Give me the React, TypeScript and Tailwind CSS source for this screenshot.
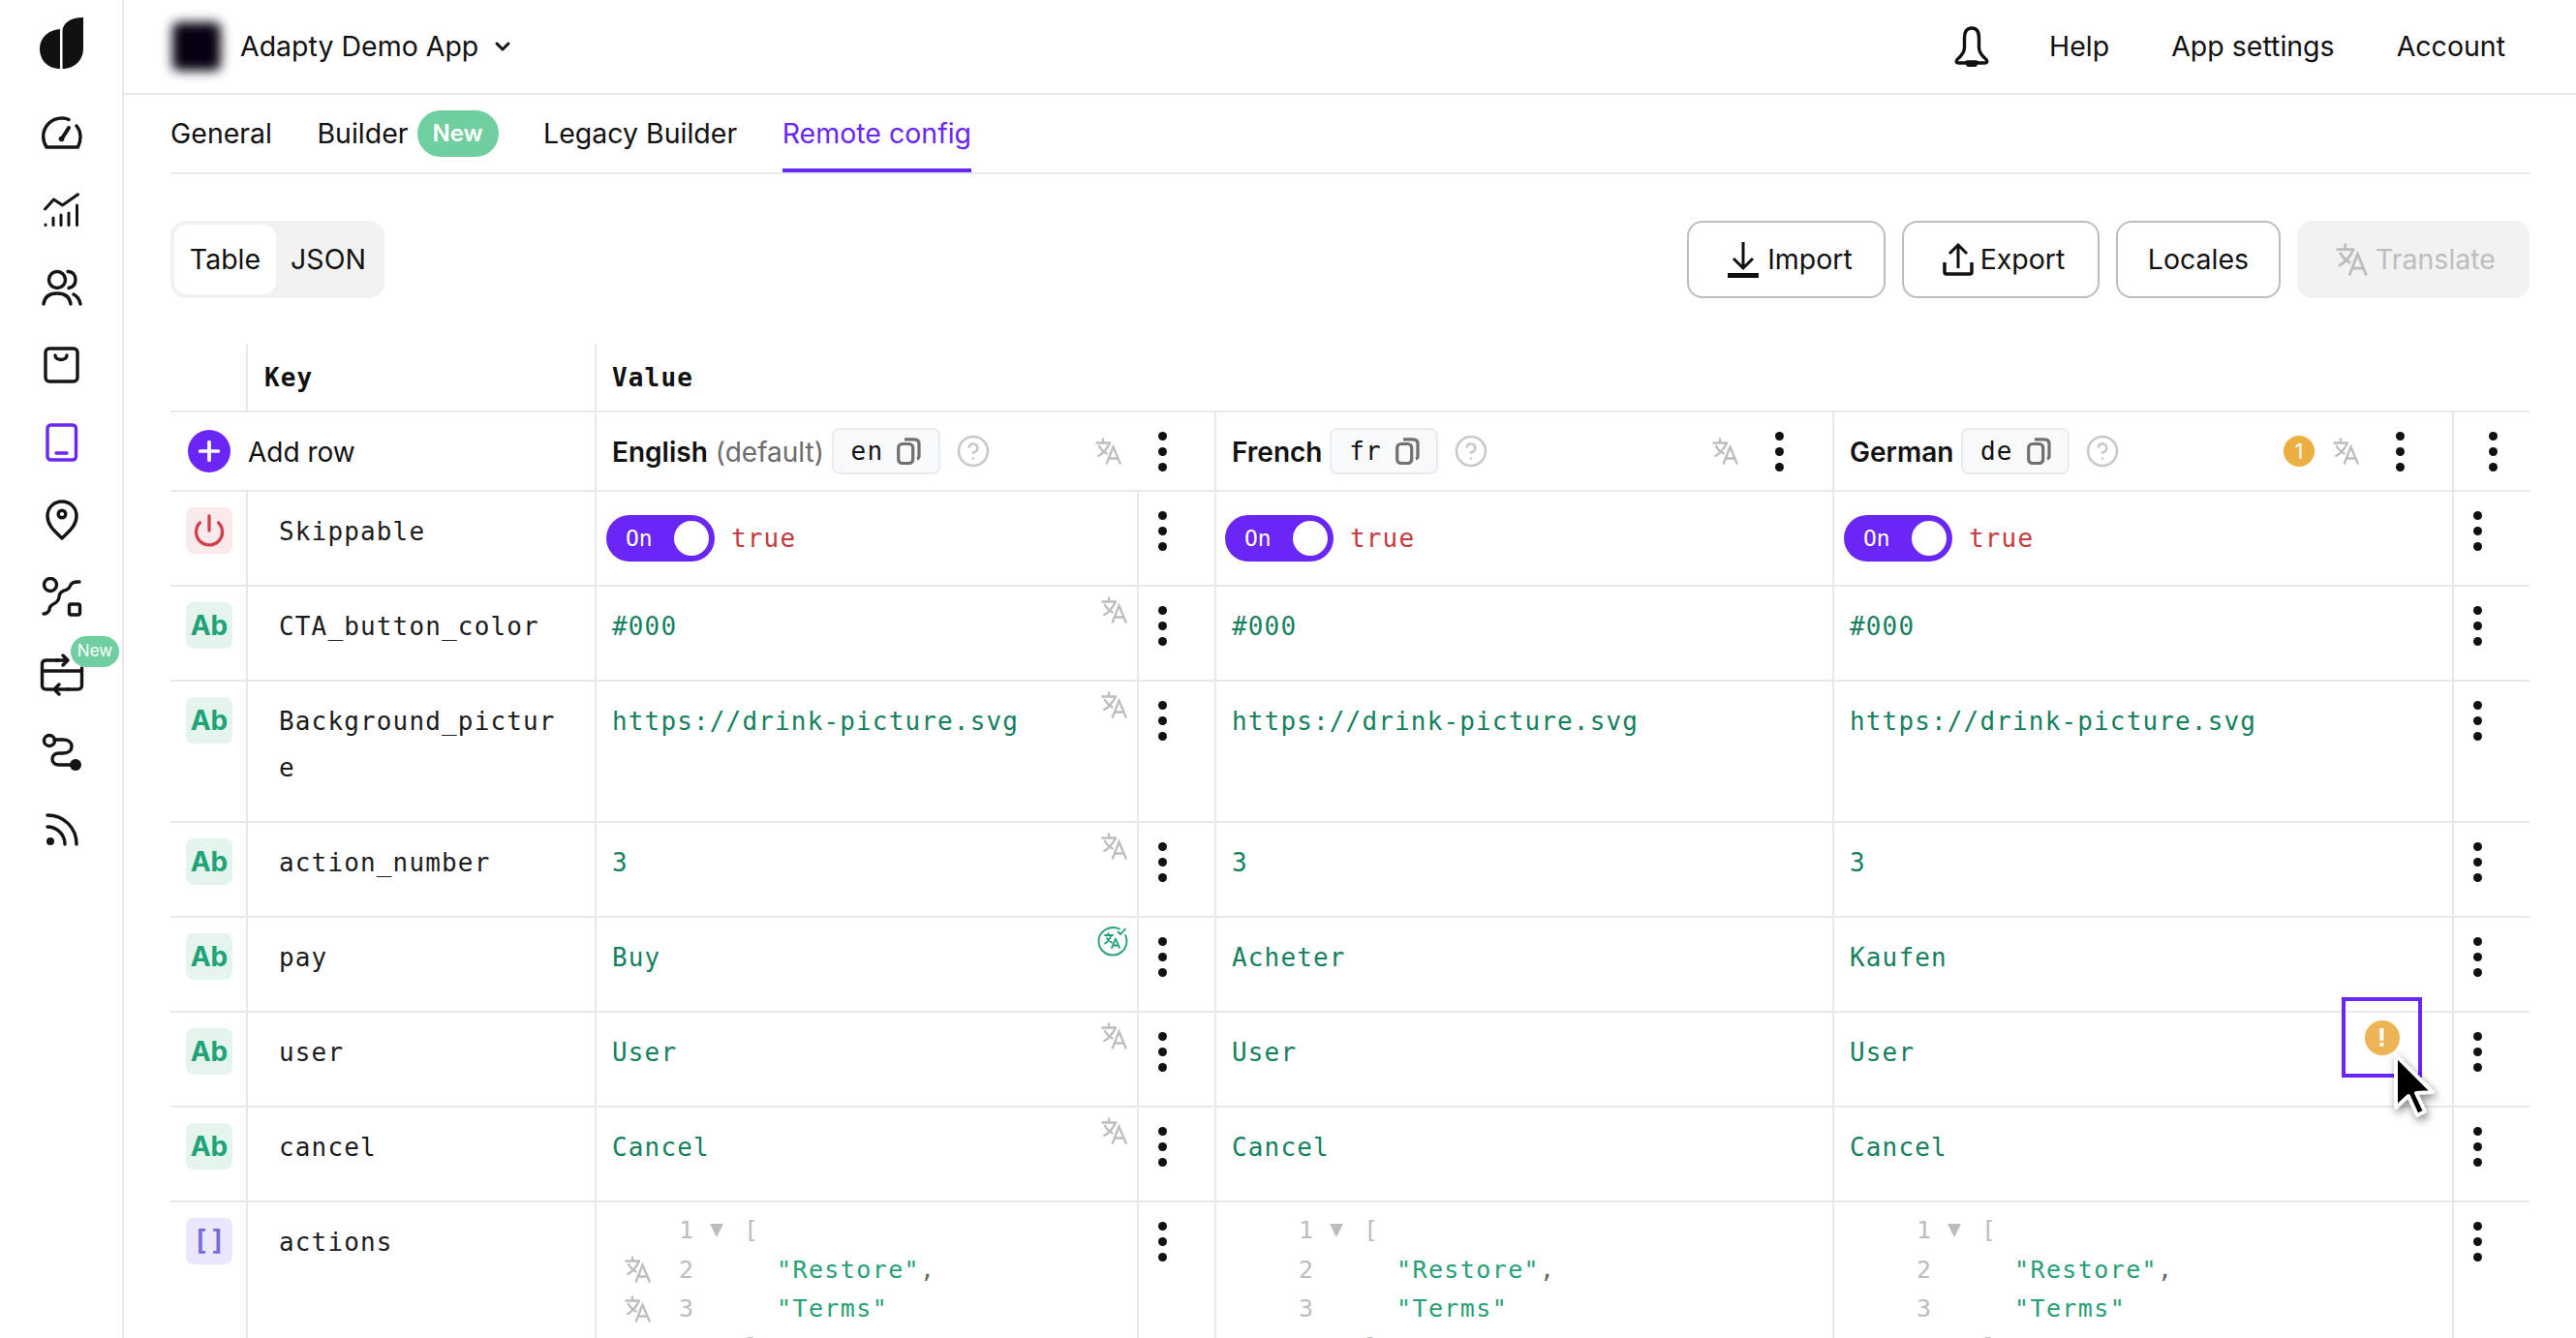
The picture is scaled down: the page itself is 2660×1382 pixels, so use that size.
import React from "react";
import { CircleHelp, ChevronDown, Plus, Power } from "lucide-react";

const mono = "font-['DejaVu_Sans_Mono',monospace] text-[26px] tracking-[1.15px]";
const line = "border-[#e8e8e8]";

const Logo = () => (
  <svg width="46" height="54" viewBox="0 0 46 54" fill="#111">
    <path d="M21 12 V53 C8 53 0 44 0 32 C0 21 9 13 21 12Z" />
    <path d="M23.500 53 V14 C23.500 6 32 0 45 0 V32 C45 44 36 53 23.500 53Z" />
  </svg>
);
const ic = { fill: "none", stroke: "#141414", strokeWidth: 3.4, strokeLinecap: "round" as const, strokeLinejoin: "round" as const };
const Gauge = () => (
  <svg width="42" height="34" viewBox="0 0 42 34" {...ic}>
    <path d="M5 32 C2.500 28 1.700 25 1.700 21 C1.700 10.500 10 2 21 2 C24 2 26 2.500 28 3.500 M36 10 C38.800 13.500 40 17 40 21 C40 25 39.500 28 37.500 32 H5" />
    <path d="M21 23 L28 12" strokeWidth="4" />
    <circle cx="20.500" cy="23.500" r="2.800" fill="#141414" stroke="none" />
  </svg>
);
const Chart = () => (
  <svg width="38" height="36" viewBox="0 0 38 36" {...ic} strokeWidth="3">
    <path d="M1.500 17 L10.500 7 L19.500 13 L35.500 1.800" />
    <path d="M2 33.500 V33 M10 26 V33.500 M18 23 V33.500 M26 21 V33.500 M34.500 13 V33.500" />
  </svg>
);
const Users = () => (
  <svg width="42" height="38" viewBox="0 0 42 38" {...ic}>
    <circle cx="16" cy="11" r="8.500" />
    <path d="M2 36 C3 29 8 25 16 25 C24 25 29 29 30 36" />
    <path d="M27 2.500 C32 2.500 35 6 35 11 C35 15.500 32 18.500 28 19.500" />
    <path d="M33 26 C37 28 39 31 40 36" />
  </svg>
);
const Bag = () => (
  <svg width="38" height="38" viewBox="0 0 38 38" {...ic}>
    <rect x="2" y="2" width="33" height="34" rx="4" />
    <path d="M12 9 C12 15 24 15 24 9" />
  </svg>
);
const Device = () => (
  <svg width="34" height="40" viewBox="0 0 34 40" fill="none" stroke="#6a26f5" strokeWidth="3.400" strokeLinecap="round">
    <rect x="2" y="2" width="29.500" height="36" rx="3.500" />
    <path d="M11 31 H22" strokeWidth="3.400" />
  </svg>
);
const Pin = () => (
  <svg width="34" height="42" viewBox="0 0 34 42" {...ic}>
    <path d="M17 40 C10 33 2 27 2 17 C2 8 9 2 17 2 C25 2 32 8 32 17 C32 27 24 33 17 40Z" />
    <circle cx="17" cy="15" r="3.800" />
  </svg>
);
const Flow = () => (
  <svg width="42" height="42" viewBox="0 0 42 42" {...ic}>
    <circle cx="9" cy="8" r="6.500" />
    <rect x="28.500" y="28" width="11" height="11" rx="2" />
    <path d="M39 5 Q31 4.500 29.500 9 Q28 13 23 14 Q18 16 18 21 Q17 26 12 28 Q8 30 8 34 Q6 38 2 38" />
  </svg>
);
const Cards = () => (
  <svg width="46" height="44" viewBox="0 0 46 44" {...ic}>
    <path d="M19 7 H7 C4 7 2.500 8.500 2.500 11 V33 C2.500 36 4 37 7 37 H13 M29 37 H39 C42 37 43.500 36 43.500 33 V15 M2.500 18 H43.500" />
    <path d="M24 2 L29 7 L24 12 M29 7 H17 M20 32 L15 37 L20 42 M15 37 H29" />
  </svg>
);
const Route = () => (
  <svg width="42" height="40" viewBox="0 0 42 40" {...ic}>
    <circle cx="8" cy="8" r="5.500" />
    <path d="M13 7 H22 C28 7 31 10 31 14 C31 18 28 21 22 21 H18 C13 21 11 24 11 27 C11 31 14 33 18 33 H33" />
    <circle cx="35" cy="33" r="6" fill="#141414" stroke="none" />
  </svg>
);
const Rss = () => (
  <svg width="36" height="36" viewBox="0 0 36 36" {...ic}>
    <path d="M3 3 C20 3 33 16 33 33" />
    <path d="M3 15 C13 15 21 23 21 33" />
    <circle cx="6" cy="30" r="4" fill="#141414" stroke="none" />
  </svg>
);
const Bell = () => (
  <svg width="38" height="42" viewBox="0 0 38 42" fill="none" stroke="#111" strokeWidth="3.400" strokeLinejoin="round">
    <path d="M19 2 C14 2 11.500 6 11.500 12 V22 C11.500 27 9 30 5 33.500 C2 36 3 38 6 38 H32 C35 38 36 36 33 33.500 C29 30 26.500 27 26.500 22 V12 C26.500 6 24 2 19 2Z" />
    <path d="M14 37 H24 C24 41 21.500 41 19 41 C16.500 41 14 41 14 37Z" fill="#111" />
  </svg>
);
const Download = () => (
  <svg width="32" height="38" viewBox="0 0 32 38" fill="none" stroke="#111" strokeWidth="3">
    <path d="M16 1 V27 M6 18 L16 28 L26 18" />
    <path d="M0 35.500 H32" strokeWidth="5" />
  </svg>
);
const Upload = () => (
  <svg width="32" height="34" viewBox="0 0 32 34" fill="none" stroke="#111" strokeWidth="3">
    <path d="M16 26 V3 M7 11 L16 2 L25 11" />
    <path d="M2 20 V30 C2 31.500 3 32 4 32 H28 C29 32 30 31.500 30 30 V20" strokeWidth="3.500" />
  </svg>
);
const Copy = () => (
  <svg width="25" height="28" viewBox="0 0 25 28" fill="none" stroke="#6f7073" strokeWidth="3.200">
    <rect x="1.700" y="6.500" width="15" height="20" rx="4" />
    <path d="M8 1.800 H18 C21 1.800 23 3.500 23 6.500 V19 C23 20.500 22.500 21.500 21 22" />
  </svg>
);
const Cursor = () => (
  <svg width="52" height="76" viewBox="-6 -6 52 76" className="drop-shadow-[2px_4px_4px_rgba(0,0,0,0.45)]">
    <path d="M0 0 L0 54 L13 42 L22 62 L30 58 L21 39 L38 38 Z" fill="#000" stroke="#fff" strokeWidth="4" strokeLinejoin="round" />
  </svg>
);
const TranslateDone = () => (
  <svg width="32" height="32" viewBox="0 0 32 32" fill="none" stroke="#1f9e74" strokeWidth="1.800" strokeLinecap="round" strokeLinejoin="round">
    <path d="M23 3.500 C13 -1 1.500 6 1.500 16 C1.500 24 8 30.500 16 30.500 C24 30.500 30.500 24 30.500 16 C30.500 13.500 30 12 29 10" />
    <path d="M8 10 H16 M11.500 8 V10 M14.500 10 C13 14.500 10.500 17 8 18.500 M10 13 C11 15 13 16.500 15 17.500 M15 23 L19 13.500 L23 23 M16.500 20.500 H21.500" />
    <path d="M21.500 6.500 L24 9 L29 3.500" />
  </svg>
);

const T = ({ s = 28 }: { s?: number }) => (
  <svg width={s} height={s} viewBox="0 0 28 28" fill="none" stroke="#bdbdbd" strokeWidth="2.300" className="shrink-0">
    <path d="M0.500 5.500 H16 M8 0.500 V5.500 M15 5.500 C12 12 8 16.500 2.500 19.500 M3.500 8 C5.500 12 8.500 15 12.500 17" />
    <path d="M11.500 27.500 L18.500 9.500 L26 27.500 M14 21.500 H23.500" />
  </svg>
);

const Dots = () => (
  <div className="flex w-[10px] flex-col items-center gap-[7px]">
    <span className="h-[9px] w-[9px] rounded-full bg-[#111]" />
    <span className="h-[9px] w-[9px] rounded-full bg-[#111]" />
    <span className="h-[9px] w-[9px] rounded-full bg-[#111]" />
  </div>
);

const NavItem = ({ children }: { children: React.ReactNode }) => (
  <div className="relative flex h-[80px] w-full items-center justify-center">{children}</div>
);

const Sidebar = () => (
  <aside className={`flex h-full w-[128px] shrink-0 flex-col items-center border-r-2 ${line} pl-[2px] pt-[18px]`}>
    <div className="flex h-[79px] items-start justify-center"><Logo /></div>
    <NavItem><Gauge /></NavItem>
    <NavItem><Chart /></NavItem>
    <NavItem><Users /></NavItem>
    <NavItem><Bag /></NavItem>
    <NavItem><Device /></NavItem>
    <NavItem><Pin /></NavItem>
    <NavItem><Flow /></NavItem>
    <NavItem>
      <Cards />
      <span className="absolute left-[71px] top-[0px] flex h-[32px] w-[50px] items-center justify-center rounded-full bg-[#6fcf9f] text-[17px] text-white">New</span>
    </NavItem>
    <NavItem><Route /></NavItem>
    <NavItem><Rss /></NavItem>
  </aside>
);

const TopBar = () => (
  <header className={`flex h-[98px] shrink-0 items-center border-b-2 ${line} pl-[50px] pr-[73px]`}>
    <div className="mr-[20px] h-[50px] w-[50px] rounded-[6px] bg-[#060010] blur-[6px]" />
    <span className="text-[28.500px] text-[#111]">Adapty Demo App</span>
    <ChevronDown size={24} strokeWidth={3} color="#111" className="ml-[13px]" />
    <div className="ml-auto flex items-center gap-[64px] text-[28.500px] text-[#111]">
      <div className="mr-[-3px]"><Bell /></div>
      <span>Help</span>
      <span>App settings</span>
      <span>Account</span>
    </div>
  </header>
);

const Tabs = () => (
  <div className={`flex h-[82px] shrink-0 gap-[46.500px] border-b-2 ${line} text-[28.500px] text-[#111]`}>
    <div className="flex items-center border-b-4 border-transparent pt-[4px]">General</div>
    <div className="flex items-center gap-[9px] border-b-4 border-transparent pt-[4px]">
      Builder
      <span className="flex h-[48px] w-[84px] items-center justify-center rounded-full bg-[#6fcf9f] text-[24px] font-semibold text-white">New</span>
    </div>
    <div className="flex items-center border-b-4 border-transparent pt-[4px]">Legacy Builder</div>
    <div className="flex items-center border-b-4 border-[#6a26f5] pt-[4px] text-[#6a26f5]">Remote config</div>
  </div>
);

const btn = "flex h-[80px] items-center justify-center rounded-[16px] border-2 border-[#bdbdbd] text-[28.500px] text-[#111]";

const Toolbar = () => (
  <div className="mt-[48px] flex h-[80px] shrink-0 items-center">
    <div className="flex h-[80px] w-[221px] items-center rounded-[16px] bg-[#f2f2f2] p-[4px] text-[28.500px] text-[#111]">
      <div className="flex h-[72px] w-[105px] items-center justify-center rounded-[14px] bg-white">Table</div>
      <div className="flex flex-1 items-center justify-center">JSON</div>
    </div>
    <div className="ml-auto flex gap-[17px]">
      <div className={`${btn} w-[205px] gap-[9px] pl-[8px]`}><Download />Import</div>
      <div className={`${btn} w-[204px] gap-[7px] pl-[6px]`}><Upload />Export</div>
      <div className={`${btn} w-[170px]`}>Locales</div>
      <div className="flex h-[80px] w-[240px] items-center justify-center gap-[7px] rounded-[16px] bg-[#f2f2f2] pl-[5px] text-[28.500px] text-[#bdbdbd]"><T s={34} />Translate</div>
    </div>
  </div>
);

const Chip = ({ code }: { code: string }) => (
  <div className="flex h-[48px] w-[112px] items-center justify-center gap-[14px] rounded-[8px] border-2 border-[#e8ebf0] bg-[#f8f9fb]">
    <span className={`${mono} text-[#111]`}>{code}</span>
    <Copy />
  </div>
);

const Help = () => <CircleHelp size={36} color="#c8c8c8" strokeWidth={1.700} />;

const HeaderCell = ({ name, extra, code, w, warn, tr, helpGap }: { name: string; extra?: string; code: string; w: string; warn?: boolean; tr: string; helpGap: string }) => (
  <div className={`flex h-full items-center border-r-2 ${line} ${w} pl-[16px]`}>
    <span className="mr-[8px] pt-[2px] text-[28px] font-semibold text-[#111]">{name}</span>
    {extra && <span className="mr-[8px] pt-[2px] text-[28px] text-[#6b6b6b]">{extra}</span>}
    <Chip code={code} />
    <div className={helpGap}><Help /></div>
    <div className="ml-auto flex items-center">
      {warn && <span className="mr-[19px] flex h-[32px] w-[32px] items-center justify-center rounded-full bg-[#ecb042] text-[22px] text-white">1</span>}
      <T />
      <div className={`${tr} flex w-[10px] justify-center`}><Dots /></div>
    </div>
  </div>
);

const Toggle = () => (
  <div className="flex h-[48px] w-[112px] items-center justify-between rounded-full bg-[#6a26f5] pl-[20px] pr-[6px]">
    <span className="font-['DejaVu_Sans_Mono',monospace] text-[23px] text-white">On</span>
    <span className="h-[36px] w-[36px] rounded-full bg-white" />
  </div>
);

const TypeBox = ({ kind }: { kind: "bool" | "str" | "arr" }) => {
  if (kind === "bool")
    return (
      <div className="flex h-[48px] w-[48px] items-center justify-center rounded-[8px] bg-[#fbeaec]">
        <Power size={36} color="#d0404a" strokeWidth={2.200} />
      </div>
    );
  if (kind === "arr")
    return (
      <div className="flex h-[48px] w-[48px] items-center justify-center rounded-[8px] bg-[#ebe6fd] font-['DejaVu_Sans_Mono',monospace] text-[28px] font-bold text-[#7a6bd8]">[]</div>
    );
  return (
    <div className="flex h-[48px] w-[48px] items-center justify-center rounded-[8px] bg-[#e3f5ec] text-[28px] font-bold text-[#1fa377]">Ab</div>
  );
};

const Val = ({ children }: { children: React.ReactNode }) => (
  <div className={`${mono} pl-[16px] pt-[19px] leading-[44px] text-[#15805f]`}>{children}</div>
);

const Bool = ({ pl }: { pl: string }) => (
  <div className={`flex items-center gap-[17px] ${pl} pt-[24px]`}>
    <Toggle />
    <span className={`${mono} text-[#c8393f]`}>true</span>
  </div>
);

const Json = ({ icons, pl }: { icons?: boolean; pl: string }) => {
  const num = "w-[16px] text-[#bdbdbd]";
  const rowc = "flex h-[40.300px] items-center font-['DejaVu_Sans_Mono',monospace] text-[25px] tracking-[1.400px]";
  const gutter = (show: boolean) => <div className="flex w-[58px] items-center pl-[2px]">{show && icons && <T />}</div>;
  return (
    <div className={`${pl} pt-[9px]`}>
      <div className={rowc}>
        {gutter(false)}
        <span className={num}>1</span>
        <span className="ml-[16px] h-0 w-0 border-x-[7px] border-t-[14px] border-x-transparent border-t-[#bdbdbd]" />
        <span className="ml-[21px] text-[#bdbdbd]">[</span>
      </div>
      <div className={rowc}>
        {gutter(true)}
        <span className={num}>2</span>
        <span className="ml-[85px] text-[#27a075]">"Restore"</span>
        <span className="text-[#666]">,</span>
      </div>
      <div className={rowc}>
        {gutter(true)}
        <span className={num}>3</span>
        <span className="ml-[85px] text-[#27a075]">"Terms"</span>
      </div>
      <div className={rowc}>
        {gutter(false)}
        <span className={num}>4</span>
        <span className="ml-[51px] text-[#bdbdbd]">]</span>
      </div>
    </div>
  );
};

type RowProps = {
  kind: "bool" | "str" | "arr";
  name: string;
  h: string;
  en: React.ReactNode;
  fr: React.ReactNode;
  de: React.ReactNode;
  mark?: "plain" | "done" | "none";
  warn?: boolean;
};

const Row = ({ kind, name, h, en, fr, de, mark = "plain", warn }: RowProps) => (
  <div className={`flex ${h} shrink-0 border-b-2 ${line}`}>
    <div className={`w-[80px] shrink-0 border-r-2 ${line} pl-[16px] pt-[16px]`}><TypeBox kind={kind} /></div>
    <div className={`w-[360px] shrink-0 border-r-2 ${line} pl-[32px] pt-[17px]`}>
      <div className={`${mono} w-[292px] break-all leading-[48px] text-[#1c1c1c]`}>{name}</div>
    </div>
    <div className={`relative w-[560px] shrink-0 border-r-2 ${line}`}>
      {en}
      {mark === "plain" && <div className="absolute right-[9px] top-[10px]"><T /></div>}
      {mark === "done" && <div className="absolute right-[9px] top-[8px]"><TranslateDone /></div>}
    </div>
    <div className={`w-[80px] shrink-0 border-r-2 ${line} pl-[19px] pt-[20px]`}><Dots /></div>
    <div className={`w-[638px] shrink-0 border-r-2 ${line}`}>{fr}</div>
    <div className={`relative w-[640px] shrink-0 border-r-2 ${line}`}>
      {de}
      {warn && (
        <div className="absolute left-[524px] top-[-16px] z-10 flex h-[83px] w-[83px] items-center justify-center border-4 border-[#6a26f5]">
          <span className="flex h-[36px] w-[36px] items-center justify-center rounded-full bg-[#ecb452] text-[26px] font-bold leading-none text-white">!</span>
          <div className="absolute left-[46px] top-[50px]"><Cursor /></div>
        </div>
      )}
    </div>
    <div className="flex-1 pl-[19px] pt-[20px]"><Dots /></div>
  </div>
);

const rows: { kind: "str"; name: string; h: string; v: string[]; mark?: "plain" | "done" }[] = [
  { kind: "str", name: "CTA_button_color", h: "h-[98px]", v: ["#000", "#000", "#000"] },
  { kind: "str", name: "Background_picture", h: "h-[146px]", v: ["https://drink-picture.svg", "https://drink-picture.svg", "https://drink-picture.svg"] },
  { kind: "str", name: "action_number", h: "h-[98px]", v: ["3", "3", "3"] },
  { kind: "str", name: "pay", h: "h-[98px]", v: ["Buy", "Acheter", "Kaufen"], mark: "done" },
  { kind: "str", name: "user", h: "h-[98px]", v: ["User", "User", "User"] },
  { kind: "str", name: "cancel", h: "h-[98px]", v: ["Cancel", "Cancel", "Cancel"] },
];

const Table = () => (
  <div className="mt-[48px] flex flex-col">
    <div className={`flex h-[70px] shrink-0 border-b-2 ${line} text-[#111]`}>
      <div className={`w-[80px] shrink-0 border-r-2 ${line}`} />
      <div className={`flex w-[360px] shrink-0 items-center border-r-2 ${line} pl-[17px]`}>
        <span className={`${mono} font-bold`}>Key</span>
      </div>
      <div className="flex flex-1 items-center pl-[16px]">
        <span className={`${mono} font-bold`}>Value</span>
      </div>
    </div>
    <div className={`flex h-[82px] shrink-0 border-b-2 ${line}`}>
      <div className={`flex w-[440px] shrink-0 items-center border-r-2 ${line} pl-[18px]`}>
        <span className="flex h-[44px] w-[44px] items-center justify-center rounded-full bg-[#6a26f5]">
          <Plus size={32} color="#fff" strokeWidth={2.800} />
        </span>
        <span className="ml-[18px] pt-[2px] text-[28px] text-[#111]">Add row</span>
      </div>
      <HeaderCell name="English" extra="(default)" code="en" w="w-[640px]" tr="ml-[36px] mr-[49px]" helpGap="ml-[16px]" />
      <HeaderCell name="French" code="fr" w="w-[638px]" tr="ml-[36px] mr-[50px]" helpGap="ml-[16px]" />
      <HeaderCell name="German" code="de" w="w-[640px]" warn tr="ml-[36px] mr-[49px]" helpGap="ml-[16px]" />
      <div className="flex flex-1 items-center pl-[35px]"><Dots /></div>
    </div>
    <Row kind="bool" name="Skippable" h="h-[98px]" mark="none" en={<Bool pl="pl-[10px]" />} fr={<Bool pl="pl-[9px]" />} de={<Bool pl="pl-[10px]" />} />
    {rows.map((r) => (
      <Row key={r.name} kind={r.kind} name={r.name} h={r.h} mark={r.mark} en={<Val>{r.v[0]}</Val>} fr={<Val>{r.v[1]}</Val>} de={<Val>{r.v[2]}</Val>} warn={r.name === "user"} />
    ))}
    <Row
      kind="arr"
      name="actions"
      h="h-[200px]"
      mark="none"
      en={<Json icons pl="pl-[27px]" />}
      fr={<Json pl="pl-[27px]" />}
      de={<Json pl="pl-[27px]" />}
    />
  </div>
);

export default function App() {
  return (
    <div className="flex h-[1382px] w-[2660px] overflow-hidden bg-white font-['Inter',sans-serif]">
      <Sidebar />
      <div className="flex min-w-0 flex-1 flex-col">
        <TopBar />
        <main className="flex flex-col pl-[48px] pr-[48px]">
          <Tabs />
          <Toolbar />
          <Table />
        </main>
      </div>
    </div>
  );
}
